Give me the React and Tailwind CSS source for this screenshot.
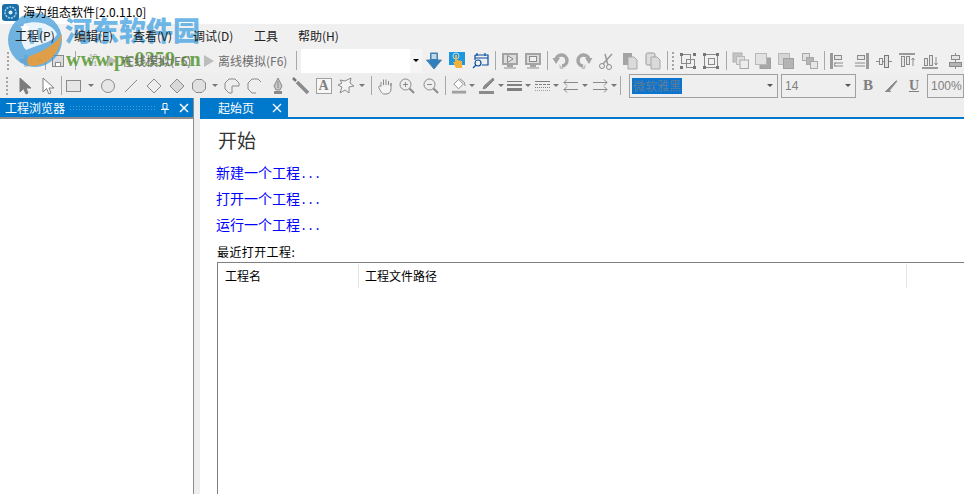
import React from 'react';

const cjk = 'font-["Noto_Sans_CJK_SC","Microsoft_YaHei",sans-serif]';

// toolbar helpers
const Slot = ({ w = 'w-[23px]', children }) => (
  <div className={`${w} h-full flex items-center justify-center shrink-0`}>{children}</div>
);

const Sep = ({ w = 'w-[4px]' }) => (
  <div className={`${w} h-full flex items-center justify-center shrink-0`}>
    <div className="w-px h-[19px] bg-[#a8a8a8]" />
  </div>
);

const Grip = ({ w = 'w-[13px]' }) => (
  <div className={`${w} h-full flex items-center justify-center shrink-0`}>
    <div className="flex flex-col gap-[2px]">
      {[0, 1, 2, 3, 4].map((i) => (
        <div key={i} className="w-[2px] h-[2px] bg-[#a4a4a4]" />
      ))}
    </div>
  </div>
);

const Caret = ({ w = 'w-[11px]', color = 'border-t-[#777777]' }) => (
  <div className={`${w} h-full flex items-center justify-center shrink-0`}>
    <div className={`w-0 h-0 border-x-[3px] border-x-transparent border-t-[3px] ${color}`} />
  </div>
);

const Ico = ({ children, s = 18, vb = 18 }) => (
  <svg width={s} height={s} viewBox={`0 0 ${vb} ${vb}`} fill="none" stroke="#8a8a8a" strokeWidth="1">
    {children}
  </svg>
);

const Arrow = ({ filled }) => (
  <Ico>
    <path d="M4 1 L4 15 L7.5 11.5 L10 17 L12 16 L10 11 L15 11 Z" fill={filled ? '#7d7d7d' : '#fff'} stroke="#7d7d7d" />
  </Ico>
);

const Diamond = ({ filled }) => (
  <Ico>
    <path d="M9 2 L16 9 L9 16 L2 9 Z" fill={filled ? '#d8d8d8' : 'none'} />
  </Ico>
);

const StackIcon = ({ variant }) => (
  <Ico>
    {variant === 0 && (
      <>
        <rect x="1" y="1" width="9" height="9" fill="#c4c4c4" stroke="#b0b0b0" />
        <rect x="4.5" y="4.5" width="8" height="8" fill="#e0e0e0" stroke="#b8b8b8" />
        <rect x="8" y="8" width="8.5" height="8.5" fill="#ececec" stroke="#a8a8a8" />
      </>
    )}
    {variant === 1 && (
      <>
        <rect x="6" y="6" width="10.5" height="10.5" fill="#a8a8a8" stroke="#a0a0a0" />
        <rect x="1.5" y="1.5" width="11" height="11" fill="#e2e2e2" stroke="#b8b8b8" />
      </>
    )}
    {variant === 2 && (
      <>
        <rect x="1.5" y="1.5" width="11" height="11" fill="#d6d6d6" stroke="#b8b8b8" />
        <rect x="6.5" y="6.5" width="10" height="10" fill="#b4b4b4" stroke="#a0a0a0" />
      </>
    )}
    {variant === 3 && (
      <>
        <rect x="1.5" y="1.5" width="7" height="7" fill="#e0e0e0" stroke="#a8a8a8" />
        <rect x="5.5" y="5.5" width="7" height="7" fill="#b4b4b4" stroke="#a8a8a8" />
        <rect x="9.5" y="9.5" width="7" height="7" fill="#e6e6e6" stroke="#a8a8a8" />
      </>
    )}
  </Ico>
);

const AlignIcon = ({ variant }) => (
  <Ico>
    {variant === 0 && (
      <>
        <rect x="1" y="1" width="3" height="16" fill="#9a9a9a" stroke="none" />
        <rect x="5.5" y="3.5" width="7" height="4" fill="#e6e6e6" />
        <path d="M5 11 H14 M5 14 H14 M5 12.5 L7 11 M5 12.5 L7 14" />
      </>
    )}
    {variant === 1 && (
      <>
        <rect x="14" y="1" width="3" height="16" fill="#9a9a9a" stroke="none" />
        <rect x="5.5" y="3.5" width="7" height="4" fill="#e6e6e6" />
        <path d="M3 11 H13 M3 14 H13" />
      </>
    )}
    {variant === 2 && (
      <>
        <path d="M1 9.5 H17" />
        <rect x="4.5" y="6.5" width="3" height="6" fill="#f0f0f0" />
        <rect x="9.5" y="3.5" width="4" height="12" fill="#dedede" stroke="#777" />
      </>
    )}
    {variant === 3 && (
      <>
        <rect x="1" y="1" width="16" height="2" fill="#9a9a9a" stroke="none" />
        <rect x="3.5" y="4.5" width="3" height="10" fill="#e6e6e6" />
        <rect x="8.5" y="4.5" width="3" height="8" fill="#e6e6e6" />
        <path d="M15 14 V6 M13.5 8 L15 6 L16.5 8" />
      </>
    )}
    {variant === 4 && (
      <>
        <rect x="1" y="15" width="16" height="2" fill="#9a9a9a" stroke="none" />
        <rect x="3.5" y="6.5" width="3" height="7" fill="#e6e6e6" />
        <rect x="8.5" y="3.5" width="3" height="10" fill="#e6e6e6" />
        <path d="M15 5 V13 M13.5 11 L15 13 L16.5 11" />
      </>
    )}
    {variant === 5 && (
      <>
        <path d="M9.5 1 V17" />
        <rect x="5.5" y="3.5" width="8" height="4" fill="#e6e6e6" />
        <rect x="3.5" y="10.5" width="12" height="4" fill="#b4b4b4" />
      </>
    )}
  </Ico>
);

const Monitor = ({ play }) => (
  <Ico>
    <rect x="1" y="1" width="16" height="12" fill="#a4a4a4" stroke="none" />
    <rect x="3" y="3" width="12" height="8" fill="#dcdcdc" stroke="none" />
    {play ? (
      <path d="M6.5 3.5 L12 7 L6.5 10.5 Z" fill="#e6e6e6" stroke="#8a8a8a" />
    ) : (
      <rect x="5.5" y="4.5" width="7" height="5" fill="#f0f0f0" stroke="#8a8a8a" />
    )}
    <rect x="6" y="13" width="6" height="2" fill="#a4a4a4" stroke="none" />
    <rect x="3" y="15" width="12" height="2" fill="#bebebe" stroke="none" />
  </Ico>
);

const Undo = ({ flip }) => (
  <Ico>
    <g transform={flip ? 'translate(18 0) scale(-1 1)' : undefined}>
      <path d="M4 8 A5.5 5.5 0 1 1 10 14" stroke="#a4a4a4" strokeWidth="3.5" />
      <path d="M0.5 6 L8 6 L4 12 Z" fill="#a4a4a4" stroke="none" />
      <path d="M7 12 L12 17 L8 17 Z" fill="#c4c4c4" stroke="none" />
    </g>
  </Ico>
);

const Doc = ({ paste }) => (
  <Ico>
    <rect x="2" y="1" width="9" height="12" rx={paste ? 1.5 : 0} fill={paste ? '#dcdcdc' : '#a4a4a4'} stroke={paste ? '#9a9a9a' : 'none'} />
    <path d="M7 5 H13 L16 8 V17 H7 Z" fill="#dadada" stroke="#a8a8a8" />
  </Ico>
);

const Select = ({ wide, w, children, arrow = true }) => (
  <div className={`${w} h-[24px] shrink-0 border border-[#a0a0a0] flex items-center justify-between bg-[#efefef] ${wide ? 'pl-[2px] pr-[4px]' : 'pl-[3px] pr-[4px]'}`}>
    {children}
    {arrow && <div className="w-0 h-0 border-x-[3px] border-x-transparent border-t-[3px] border-t-[#555555]" />}
  </div>
);

const Row1 = () => (
  <div className="h-[25px] flex items-center bg-[#f0f0f0] overflow-hidden">
    <Grip w="w-[16px]" />
    <Slot w="w-[20px]">
      <Ico s={14} vb={14}><path d="M7 1 V13 M1 7 H13" stroke="#c8c8c8" strokeWidth="4" /></Ico>
    </Slot>
    <Caret w="w-[8px]" />
    <Sep w="w-[3px]" />
    <Slot w="w-[22px]">
      <Ico s={14} vb={14}><rect x="1.5" y="1.5" width="11" height="11" fill="#dcdcdc" /><rect x="4.5" y="8.5" width="5" height="4" fill="#fff" /></Ico>
    </Slot>
    <Sep w="w-[12px]" />
    <Slot w="w-[24px]">
      <span className='font-["Liberation_Mono"] text-[7px] leading-[7px] text-[#9a9a9a] text-center'>10<br />01</span>
    </Slot>
    <Slot w="w-[14px]">
      <div className="w-0 h-0 border-y-[6px] border-y-transparent border-l-[10px] border-l-[#bdbdbd]" />
    </Slot>
    <span className={`${cjk} relative z-10 text-[12px] text-[#6d6d6d] w-[83px] shrink-0 pl-[3px]`}>在线模拟(F5)</span>
    <Slot w="w-[14px]">
      <div className="w-0 h-0 border-y-[6px] border-y-transparent border-l-[10px] border-l-[#bdbdbd]" />
    </Slot>
    <span className={`${cjk} text-[12px] text-[#6d6d6d] w-[79px] shrink-0 pl-[2px]`}>离线模拟(F6)</span>
    <Sep w="w-[3px]" />
    <div className="w-[109px] h-[24px] bg-white shrink-0 ml-[3px]" />
    <div className="w-[12px] h-[24px] bg-[#f5f5f5] shrink-0 flex items-center justify-center">
      <div className="w-0 h-0 border-x-[3px] border-x-transparent border-t-[3px] border-t-black" />
    </div>
    <Slot w="w-[24px]">
      <Ico>
        <path d="M5.5 1 H12.5 V8 H16.5 L9 17 L1.5 8 H5.5 Z" fill="#2f7fbd" stroke="#4c84ad" />
        <path d="M6.5 2 H11.5 V7 H6.5 Z" fill="#c4d9ea" stroke="none" />
      </Ico>
    </Slot>
    <Slot w="w-[22px]">
      <svg width="17" height="17" viewBox="0 0 17 17">
        <rect width="16" height="13" fill="#1f97dd" />
        <circle cx="7" cy="4" r="3" fill="none" stroke="#b8e0f7" />
        <path d="M6 3 H8 V8 L13 9 V16 H7 L4 10 L6 10 Z" fill="#f2b33a" />
      </svg>
    </Slot>
    <Slot w="w-[24px]">
      <svg width="17" height="17" viewBox="0 0 17 17" fill="none" stroke="#0b4f9e" strokeWidth="1.2">
        <path d="M3 3 H16 V13 H10 M3 3 V8 M3 6 H16" />
        <path d="M5 1 V4 M13 1 V4" />
        <circle cx="6" cy="11" r="3" />
        <path d="M4 13 L1 16" />
      </svg>
    </Slot>
    <Sep w="w-[6px]" />
    <Slot w="w-[23px]"><Monitor play /></Slot>
    <Slot w="w-[23px]"><Monitor /></Slot>
    <Sep w="w-[6px]" />
    <Slot w="w-[22px]"><Undo /></Slot>
    <Slot w="w-[23px]"><Undo flip /></Slot>
    <Slot w="w-[24px]">
      <Ico>
        <circle cx="4" cy="14" r="2.5" />
        <circle cx="11" cy="15" r="2.5" />
        <path d="M5 12 L14 2 M10 13 L7 2" stroke="#9a9a9a" strokeWidth="1.5" />
      </Ico>
    </Slot>
    <Slot w="w-[22px]"><Doc /></Slot>
    <Slot w="w-[24px]"><Doc paste /></Slot>
    <Sep w="w-[4px]" />
    <Grip w="w-[7px]" />
    <Slot w="w-[24px]">
      <Ico>
        <rect x="2.5" y="2.5" width="9" height="9" />
        <rect x="7.5" y="7.5" width="8" height="8" />
        <g fill="#777" stroke="none"><rect x="1" y="1" width="3" height="3" /><rect x="14" y="1" width="3" height="3" /><rect x="1" y="14" width="3" height="3" /><rect x="14" y="14" width="3" height="3" /></g>
      </Ico>
    </Slot>
    <Slot w="w-[22px]">
      <Ico>
        <rect x="2.5" y="2.5" width="13" height="13" />
        <rect x="6.5" y="6.5" width="6" height="6" />
        <g fill="#777" stroke="none"><rect x="1" y="1" width="3" height="3" /><rect x="14" y="1" width="3" height="3" /><rect x="1" y="14" width="3" height="3" /><rect x="14" y="14" width="3" height="3" /></g>
      </Ico>
    </Slot>
    <Sep w="w-[8px]" />
    <Slot w="w-[21px]"><StackIcon variant={0} /></Slot>
    <Slot w="w-[24px]"><StackIcon variant={1} /></Slot>
    <Slot w="w-[22px]"><StackIcon variant={2} /></Slot>
    <Slot w="w-[25px]"><StackIcon variant={3} /></Slot>
    <Sep w="w-[5px]" />
    <Slot w="w-[22px]"><AlignIcon variant={0} /></Slot>
    <Slot w="w-[24px]"><AlignIcon variant={1} /></Slot>
    <Slot w="w-[22px]"><AlignIcon variant={2} /></Slot>
    <Slot w="w-[24px]"><AlignIcon variant={3} /></Slot>
    <Slot w="w-[22px]"><AlignIcon variant={4} /></Slot>
    <Slot w="w-[28px]"><AlignIcon variant={5} /></Slot>
  </div>
);

const Row2 = () => (
  <div className="h-[25px] flex items-center bg-[#eeeeee] overflow-hidden">
    <Grip w="w-[13px]" />
    <Slot><Arrow filled /></Slot>
    <Slot><Arrow /></Slot>
    <Sep />
    <Slot w="w-[22px]"><Ico><rect x="1.5" y="3.5" width="14" height="11" fill="#e6e6e6" /></Ico></Slot>
    <Caret />
    <Slot><Ico><circle cx="9" cy="9" r="6.5" fill="#e6e6e6" /></Ico></Slot>
    <Slot><Ico><path d="M3 15 L15 3" /></Ico></Slot>
    <Slot><Diamond /></Slot>
    <Slot><Diamond filled /></Slot>
    <Slot w="w-[21px]"><Ico><path d="M6 2.5 H12 L15.5 6 V12 L12 15.5 H6 L2.5 12 V6 Z" fill="#e0e0e0" /></Ico></Slot>
    <Caret />
    <Slot><Ico><path d="M9 16 H6 L2 12 V6 L6 2 H12 L16 6 V9 H9 Z" /></Ico></Slot>
    <Slot><Ico><path d="M15 5 L12 2 H6 L2 6 V12 L6 16 H10" /></Ico></Slot>
    <Slot>
      <Ico>
        <path d="M9 1 L13 9 L11 13 H7 L5 9 Z" fill="#c8c8c8" />
        <path d="M9 4 V11" />
        <rect x="5" y="14" width="8" height="3" fill="#8a8a8a" stroke="none" />
      </Ico>
    </Slot>
    <Slot><Ico><path d="M1 1 L4 4" stroke="#777" strokeWidth="2.5" /><path d="M5 5 L16 16" stroke="#8a8a8a" strokeWidth="3.5" /></Ico></Slot>
    <Slot>
      <div className="w-[16px] h-[16px] border border-[#a0a0a0] bg-[#f7f7f7] flex items-center justify-center text-[14px] leading-none font-bold text-[#808080] font-['Liberation_Serif']">A</div>
    </Slot>
    <Slot w="w-[21px]"><Ico><path d="M3 3 L8 4 L14 1 L13 6 L17 9 L12 10 L12 16 L8 13 L3 16 L5 10 L1 8 L5 6 Z" fill="#f4f4f4" /></Ico></Slot>
    <Caret />
    <Sep w="w-[8px]" />
    <Slot w="w-[20px]">
      <Ico>
        <path d="M5 9 V5 M7.5 8 V2.5 M10 8 V2.5 M12.5 8 V4 M15 9 V6 V12 C15 15 13 17 10 17 H8 C6 17 5 15 3 11 C2 9 4 8 5 10" fill="#f4f4f4" />
      </Ico>
    </Slot>
    <Slot w="w-[24px]">
      <Ico><circle cx="7.5" cy="7.5" r="5.5" /><path d="M5 7.5 H10 M7.5 5 V10" /><path d="M11.5 11.5 L16 16" strokeWidth="2" /></Ico>
    </Slot>
    <Slot>
      <Ico><circle cx="7.5" cy="7.5" r="5.5" /><path d="M5 7.5 H10" /><path d="M11.5 11.5 L16 16" strokeWidth="2" /></Ico>
    </Slot>
    <Sep w="w-[6px]" />
    <div className="w-[3px] shrink-0" />
    <Slot w="w-[17px]">
      <Ico>
        <path d="M3 7 L8 2 L13 7 L8 12 Z" fill="#fff" />
        <path d="M9 1 L14 5 L15 9" />
        <rect x="1" y="14" width="15" height="3" fill="#a0a0a0" stroke="none" />
      </Ico>
    </Slot>
    <Caret w="w-[7px]" />
    <div className="w-[2px] shrink-0" />
    <Slot w="w-[20px]">
      <Ico>
        <path d="M15 1 L6 9 L5 12 L8 11 L16 3 Z" fill="#8a8a8a" />
        <rect x="1" y="14" width="15" height="3" fill="#8a8a8a" stroke="none" />
      </Ico>
    </Slot>
    <Caret w="w-[8px]" />
    <Slot w="w-[19px]">
      <div className="flex flex-col gap-[2px]">
        <div className="w-[15px] h-[1px] bg-[#808080]" />
        <div className="w-[15px] h-[2px] bg-[#808080]" />
        <div className="w-[15px] h-[3px] bg-[#808080]" />
      </div>
    </Slot>
    <Caret w="w-[8px]" />
    <Slot w="w-[20px]">
      <div className="flex flex-col gap-[2px]">
        <div className="w-[15px] h-px bg-[#808080]" />
        <div className="w-[15px] border-t border-dashed border-[#808080]" />
        <div className="w-[15px] border-t border-dotted border-[#808080]" />
        <div className="w-[15px] border-t border-dotted border-[#a0a0a0]" />
      </div>
    </Slot>
    <Caret w="w-[8px]" />
    <Slot w="w-[21px]">
      <Ico><path d="M16 5.5 H2 M5 2.5 L2 5.5 L5 8.5 M16 12.5 H2 M5 9.5 L2 12.5 L5 15.5" /></Ico>
    </Slot>
    <Caret w="w-[8px]" />
    <Slot w="w-[21px]">
      <Ico><path d="M2 5.5 H16 M13 2.5 L16 5.5 L13 8.5 M2 12.5 H16 M13 9.5 L16 12.5 L13 15.5" /></Ico>
    </Slot>
    <Caret w="w-[8px]" />
    <Sep w="w-[5px]" />
    <div className="w-[6px] shrink-0" />
    <Select wide w="w-[149px]">
      <span className={`${cjk} text-[12px] leading-[16px] bg-[#0a74cf] text-[#5f7d98] px-[1px]`}>微软雅黑</span>
    </Select>
    <div className="w-[3px] shrink-0" />
    <Select w="w-[75px]">
      <span className="font-['Liberation_Sans'] text-[12px] text-[#808080]">14</span>
    </Select>
    <Slot w="w-[24px]"><span className="font-['Liberation_Serif'] font-bold text-[15px] text-[#808080]">B</span></Slot>
    <Slot w="w-[22px]">
      <Ico s={14} vb={14}><path d="M2 12 L12 2 H13 L5 12 Z" fill="#8a8a8a" /><path d="M1 12.5 H7" /></Ico>
    </Slot>
    <Slot w="w-[24px]"><span className="font-['Liberation_Serif'] font-bold underline text-[14px] text-[#808080]">U</span></Slot>
    <div className="w-[37px] h-[24px] ml-[1px] shrink-0 border border-[#a0a0a0] flex items-center pl-[3px]">
      <span className="font-['Liberation_Sans'] text-[12px] text-[#808080]">100%</span>
    </div>
  </div>
);

// watermark sits over the title bar and toolbars
const Watermark = () => (
  <div className="absolute left-[0px] top-[10px] w-[210px] h-[60px] pointer-events-none">
    <svg width="66" height="60" viewBox="0 0 66 60" className="absolute left-0 top-0">
      <circle cx="35" cy="30" r="27" fill="#3f9ad8" opacity="0.72" />
      <path d="M24 14 C36 10 52 13 57 24 C54 32 40 34 26 40 C20 34 20 22 24 14 Z" fill="#ffffff" opacity="0.85" />
      <path d="M30 21 H34 V34 H30 Z M38 18 H42 V30 H38 Z" fill="#3f9ad8" opacity="0.55" />
      <path d="M31 56 C46 56 60 46 62 24 C56 34 46 40 30 46 C26 48 26 54 31 56 Z" fill="#f29a2e" opacity="0.85" />
      <path d="M25 13 L26.5 16 L30 16.5 L27.5 19 L28 22 L25 20.5 L22 22 L22.5 19 L20 16.5 L23.5 16 Z" fill="#ffffff" opacity="0.9" />
    </svg>
    <span className={`absolute left-[65px] top-[4px] ${cjk} font-black text-[27px] leading-[32px] text-[#4ba6e2] opacity-80 whitespace-nowrap`}>河东软件园</span>
    <span className="absolute left-[66px] top-[37px] font-['Liberation_Serif'] font-bold text-[20px] leading-[24px] tracking-[0.2px] text-[#5f9c3a] opacity-90 whitespace-nowrap">www.pc0359.cn</span>
  </div>
);

const menus = [
  ['工程(P)', 'w-[74px] pl-[15px]'],
  ['编辑(E)', 'w-[59px]'],
  ['查看(V)', 'w-[60px]'],
  ['调试(D)', 'w-[61px]'],
  ['工具', 'w-[44px]'],
  ['帮助(H)', 'w-[50px]'],
];

const App = () => {
  return (
    <div className={`relative w-[964px] h-[494px] overflow-hidden bg-[#eeeeee] flex flex-col ${cjk}`}>
      {/* Title bar */}
      <div className="h-[24px] bg-white flex items-center pl-[2px] gap-[4px] shrink-0">
        <svg width="17" height="17" viewBox="0 0 17 17">
          <rect width="17" height="17" rx="3" fill="#1b6fa8" />
          <circle cx="8.5" cy="8.5" r="5.5" fill="none" stroke="#9fd0ea" strokeWidth="1.5" strokeDasharray="2 1" />
          <circle cx="8.5" cy="8.5" r="2" fill="#dff1fa" />
        </svg>
        <span className="relative z-10 text-[12px] text-black">海为组态软件[2.0.11.0]</span>
      </div>

      {/* Menu bar */}
      <div className="h-[24px] bg-[#f0f0f0] flex items-center shrink-0 text-[12px] text-[#222222]">
        {menus.map(([label, cls]) => (
          <span key={label} className={`${cls} relative z-10 shrink-0`}>{label}</span>
        ))}
      </div>

      <Row1 />
      <Row2 />

      {/* Panels */}
      <div className="flex-1 flex min-h-0">
        <div className="w-[194px] shrink-0 flex flex-col border-r border-[#8c8c8c]">
          <div className="h-[19px] bg-[#0078cc] flex items-center pl-[5px] pr-[4px] text-white shrink-0">
            <span className="text-[12px] whitespace-nowrap">工程浏览器</span>
            <div className="flex-1 mx-[4px] h-[5px] bg-[radial-gradient(#4a9edb_1px,transparent_1px)] bg-[length:3px_3px]" />
            <svg width="10" height="12" viewBox="0 0 10 12" className="mr-[9px]" fill="none" stroke="#fff">
              <path d="M3 1.5 H7 V7 H3 Z M1 7.5 H9 M5 8 V12" />
            </svg>
            <svg width="10" height="10" viewBox="0 0 10 10" stroke="#fff" strokeWidth="1.5">
              <path d="M1 1 L9 9 M9 1 L1 9" />
            </svg>
          </div>
          <div className="h-[2px] bg-[#8c8c8c] shrink-0" />
          <div className="flex-1 bg-white" />
        </div>

        <div className="w-[6px] shrink-0" />

        <div className="flex-1 flex flex-col min-w-0">
          <div className="h-[19px] flex shrink-0">
            <div className="w-[88px] bg-[#0078cc] flex items-center pl-[18px] text-white">
              <span className="text-[12px] w-[54px]">起始页</span>
              <svg width="10" height="10" viewBox="0 0 10 10" stroke="#fff" strokeWidth="1.3">
                <path d="M1 1 L9 9 M9 1 L1 9" />
              </svg>
            </div>
          </div>
          <div className="h-[2px] bg-[#0078cc] shrink-0" />

          <div className="flex-1 bg-white pl-[17px] flex flex-col min-h-0">
            <div className="text-[19px] leading-[24px] text-[#333333] mt-[9px] pl-[1px]">开始</div>
            <div className="mt-[7px] flex flex-col text-[#0000ff] text-[14px]">
              {['新建一个工程', '打开一个工程', '运行一个工程'].map((t) => (
                <div key={t} className="h-[26px] leading-[26px] -ml-[1px]">
                  {t}<span className="font-['Liberation_Mono'] text-[12px] tracking-[-0.2px]">...</span>
                </div>
              ))}
            </div>
            <div className="text-[12px] leading-[18px] text-black mt-[6px] tracking-[0.4px]">最近打开工程:</div>
            <div className="flex-1 border-l border-t border-[#808080] flex flex-col mt-[1px]">
              <div className="h-[25px] flex text-[12px] text-black items-stretch pt-[1px]">
                <div className="w-[141px] pl-[7px] border-r border-[#e4e4e4] flex items-center">工程名</div>
                <div className="w-[548px] pl-[6px] border-r border-[#e4e4e4] flex items-center">工程文件路径</div>
              </div>
            </div>
          </div>
        </div>
      </div>

      <Watermark />
    </div>
  );
};

export default App;
